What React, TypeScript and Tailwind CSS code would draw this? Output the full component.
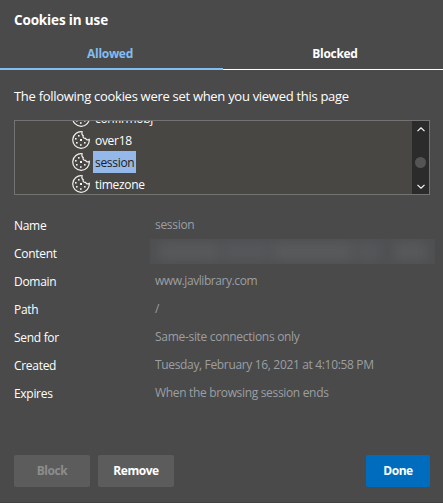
import React from "react";

const details = [
  { label: "Name", value: "session", track: "tracking-[-0.3px]" },
  { label: "Content", value: null, track: "" },
  { label: "Domain", value: "www.javlibrary.com", track: "tracking-[-0.43px]" },
  { label: "Path", value: "/", track: "" },
  { label: "Send for", value: "Same-site connections only", track: "tracking-[-0.3px]" },
  { label: "Created", value: "Tuesday, February 16, 2021 at 4:10:58 PM", track: "tracking-[-0.34px]" },
  { label: "Expires", value: "When the browsing session ends", track: "tracking-[-0.33px]" },
];

const cookies = ["confirmobj", "over18", "session", "timezone"];

function CookieIcon() {
  return (
    <svg width="18" height="18" viewBox="0 0 18 18" className="shrink-0" fill="none" stroke="#f2f2f2" strokeWidth="1.2" strokeLinejoin="round">
      <path d="M10.3 .8A8.3 8.3 0 1 0 17.3 8.2C15.9 9.4 14.4 9 13.7 7.4C11.6 7.6 10.6 6 11.3 4.6C9.9 4 9.5 2.2 10.3 .8Z" />
      <g fill="#f2f2f2" stroke="none">
        <rect x="6" y="4" width="1.6" height="1.6" />
        <rect x="3" y="7" width="1.6" height="1.6" />
        <rect x="8" y="8" width="2" height="2" />
        <rect x="4" y="11" width="1.6" height="1.6" />
        <rect x="8" y="13.2" width="1.6" height="1.6" />
        <rect x="12" y="11" width="1.6" height="1.6" />
      </g>
    </svg>
  );
}

export default function App() {
  return (
    <main className="flex h-[503px] w-[443px] flex-col overflow-hidden border-b border-[#424242] bg-[#4a4a4a] font-['Open_Sans','Noto_Sans',sans-serif] text-xs text-white">
      <h1 className="h-[41px] px-3.5 pt-[10px] text-[13.5px] leading-5 font-bold tracking-[-0.15px]">Cookies in use</h1>
      <div className="flex h-[29px] text-center text-xs leading-[25px] font-bold">
        <div className="w-[223px] border-b-2 border-[#83bdf1] pr-[3px] tracking-[-0.3px] text-[#83bdf1]">Allowed</div>
        <div className="flex-1 border-b border-white pl-1 tracking-[-0.3px]">Blocked</div>
      </div>
      <p className="mt-[15px] ml-3.5 h-[35px] text-[13px] leading-[22px] tracking-[-0.29px] whitespace-nowrap">The following cookies were set when you viewed this page</p>

      <section className="mx-3.5 mr-[13px] flex h-[75px] shrink-0 overflow-hidden border border-[#737373] bg-[#484743]">
        <ul className="-mt-3.5 flex-1 pl-[57px]">
          {cookies.map((name) => (
            <li key={name} className="flex h-[22px] items-center gap-[3px]">
              <CookieIcon />
              <span className={name === "session" ? "h-[22px] w-[43px] bg-[#94b8e9] pl-0.5 leading-[23px] tracking-[-0.3px] text-[#202020]" : "h-[22px] pl-0.5 leading-[23px] tracking-[-0.3px]"}>{name}</span>
            </li>
          ))}
        </ul>
        <div className="flex w-[17px] flex-col items-center bg-[#2b2b2b] pt-1.5">
          <svg width="8" height="5" viewBox="0 0 8 5" fill="none" stroke="white" strokeWidth="1.1"><path d="M.5 4.2 4 .8 7.5 4.2" /></svg>
          <div className="mt-[25px] size-[11px] rounded-full bg-[#545454]" />
          <svg className="mt-4" width="8" height="5" viewBox="0 0 8 5" fill="none" stroke="white" strokeWidth="1.1"><path d="M.5 .8 4 4.2 7.5 .8" /></svg>
        </div>
      </section>

      <dl className="mt-[17px] ml-3.5">
        {details.map(({ label, value, track }) => (
          <div key={label} className="flex h-7 items-center">
            <dt className="w-[141px] tracking-[-0.3px]">{label}</dt>
            {value === null ? (
              <dd className="-mt-[5px] -ml-[5px] flex h-[25px] w-[285px] items-center overflow-hidden bg-[#4e4f50]">
                <div className="flex h-[19px] w-full gap-1 px-2 blur-[6px]">
                  <span className="w-[65px] bg-[#57595b]" />
                  <span className="w-[45px] bg-[#55575a]" />
                  <span className="w-[85px] bg-[#585a5c]" />
                  <span className="w-[25px] bg-[#55575a]" />
                  <span className="ml-2 w-[35px] bg-[#57595b]" />
                </div>
              </dd>
            ) : (
              <dd className={`pb-0.5 whitespace-nowrap text-[#9b9fa2] ${track}`}>{value}</dd>
            )}
          </div>
        ))}
      </dl>

      <footer className="mt-auto mr-[13px] mb-[15px] ml-3.5 flex gap-2 text-xs font-bold tracking-[-0.45px]">
        <button className="h-8 w-[76px] rounded-xs bg-[#5c5c5c] text-[#8d8d8d]" disabled>Block</button>
        <button className="h-8 w-[76px] rounded-xs bg-[#5c5c5c]">Remove</button>
        <button className="ml-auto h-8 w-16 rounded-xs bg-[#006cbe]">Done</button>
      </footer>
    </main>
  );
}
